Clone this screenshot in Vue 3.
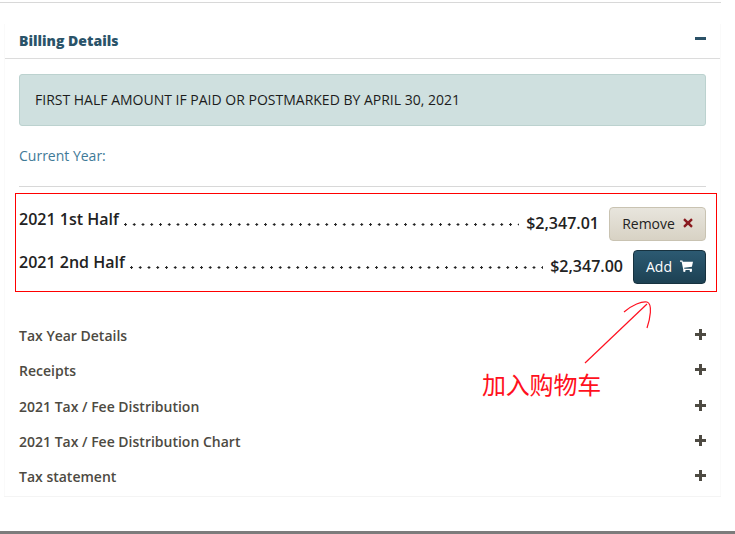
<template>
  <div class="page">
    <div class="panel">
      <div class="head">
        <h3>Billing Details</h3>
        <span class="minus"></span>
      </div>
      <div class="body">
        <div class="alert">FIRST HALF AMOUNT IF PAID OR POSTMARKED BY APRIL 30, 2021</div>
        <p class="year">Current Year:</p>
        <hr />
        <div class="rows">
          <div v-for="row in rows" :key="row.label" class="row">
            <span class="label">{{ row.label }}</span>
            <span class="dots"></span>
            <span class="amount">{{ row.amount }}</span>
            <button v-if="row.added" class="btn remove">
              Remove
              <svg width="10" height="10" viewBox="0 0 10 10"><path d="M1.8 0.3 5 3.2 8.2 0.3 9.8 2 6.9 5 9.8 8 8.2 9.7 5 6.8 1.8 9.7 0.2 8 3.1 5 0.2 2Z" fill="#8a1a1f" /></svg>
            </button>
            <button v-else class="btn add">
              Add
              <svg width="13" height="12" viewBox="0 0 12 11"><path d="M0 .4h2.2l.4 1.2H12l-1 4.7-7.2.8.2 1h7v1.1H3.1L1.5 1.5H0Z" fill="#fff" /><circle cx="4" cy="9.9" r="1.1" fill="#fff" /><circle cx="10" cy="9.9" r="1.1" fill="#fff" /></svg>
            </button>
          </div>
        </div>
        <ul class="sections">
          <li v-for="s in sections" :key="s">
            <span>{{ s }}</span>
            <span class="plus"></span>
          </li>
        </ul>
      </div>
    </div>

    <!-- 标注 -->
    <div class="mark-box"></div>
    <svg class="mark-arrow" width="80" height="70" viewBox="0 0 80 70" fill="none" stroke="#ff1020" stroke-width="1.2">
      <path d="M5 68 L67 9" />
      <path d="M44 17 C52 10 62 6 67 7 C73 9 70 24 67 33" />
    </svg>
    <div class="mark-text">加入购物车</div>
    <div class="bottom"></div>
  </div>
</template>

<script setup>
const rows = [
  { label: '2021 1st Half', amount: '$2,347.01', added: true },
  { label: '2021 2nd Half', amount: '$2,347.00', added: false }
]
const sections = [
  'Tax Year Details',
  'Receipts',
  '2021 Tax / Fee Distribution',
  '2021 Tax / Fee Distribution Chart',
  'Tax statement'
]
</script>

<style>
html, body {
  margin: 0;
  background: #fff;
}
</style>

<style scoped>
.page {
  position: relative;
  width: 735px;
  height: 534px;
  overflow: hidden;
  padding-top: 2px;
  box-sizing: border-box;
  font-family: "Open Sans", "Noto Sans CJK SC", sans-serif;
  color: #222;
}
.panel {
  width: 717px;
  margin-left: 4px;
  height: 495px;
  box-sizing: border-box;
  border-bottom: 1px solid #f4f4f4;
  position: relative;
}
.panel::before {
  content: "";
  position: absolute;
  top: 0;
  left: -4px;
  right: 0;
  border-top: 1px solid #d8d8d8;
}
.panel::after {
  content: "";
  position: absolute;
  top: 22px;
  bottom: 0;
  left: 0;
  right: 0;
  border: solid #fafafa;
  border-width: 0 1px;
  pointer-events: none;
}
.head {
  height: 57px;
  box-sizing: border-box;
  border-bottom: 1px solid #dcdcdc;
  display: flex;
  align-items: center;
  justify-content: space-between;
  padding: 21px 15px 0 15px;
}
h3 {
  margin: 0;
  font-size: 14px;
  font-weight: 800;
  color: #2a5369;
}
.minus {
  width: 11px;
  height: 3px;
  background: #2b5167;
  margin-top: -4px;
}
.body {
  padding: 15px 15px 0 15px;
}
.alert {
  height: 52px;
  box-sizing: border-box;
  background: #cfe0df;
  border: 1px solid #bcd2cf;
  border-radius: 3px;
  padding: 0 0 2px 15px;
  display: flex;
  align-items: center;
  font-size: 14px;
  color: #1c1c1c;
}
.year {
  margin: 21px 0 0;
  font-size: 14px;
  line-height: 18px;
  color: #3f7a97;
}
hr {
  margin: 21px 0 0;
  border: 0;
  border-top: 1px solid #d8d8d8;
}
.rows {
  padding-top: 20px;
  display: flex;
  flex-direction: column;
  gap: 9px;
}
.row {
  display: flex;
  align-items: center;
  height: 34px;
}
.label {
  font-size: 16px;
  font-weight: 600;
  margin-top: -10px;
}
.dots {
  flex: 1;
  height: 3px;
  margin: 0 7px 0 5px;
  background-image: radial-gradient(circle at 1.5px 1.5px, #222 1px, transparent 1.4px);
  background-size: 8.75px 3px;
  background-repeat: repeat-x;
}
.amount {
  font-size: 16px;
  font-weight: 600;
  margin: -2px 10px 0 0;
}
.btn {
  height: 34px;
  box-sizing: border-box;
  border-radius: 4px;
  font-family: inherit;
  font-size: 14px;
  display: flex;
  align-items: center;
  justify-content: center;
  gap: 8px;
  padding: 0 0 2px;
}
.remove {
  width: 97px;
  background: linear-gradient(#e8e5dd, #d8d2c4);
  border: 1px solid #c9c3b2;
  color: #222;
}
.add {
  width: 73px;
  background: linear-gradient(#2c5a72, #1d4153);
  border: 1px solid #17323f;
  color: #fff;
}
.sections {
  list-style: none;
  margin: 34px 0 0;
  padding: 0;
}
.sections li {
  height: 35.3px;
  display: flex;
  align-items: center;
  justify-content: space-between;
  font-size: 14px;
  font-weight: 600;
  color: #4d4a42;
}
.plus {
  width: 11px;
  height: 11px;
  margin-top: -2px;
  background:
    linear-gradient(#4d4a42, #4d4a42) center / 11px 3px no-repeat,
    linear-gradient(#4d4a42, #4d4a42) center / 3px 11px no-repeat;
}
.mark-box {
  position: absolute;
  left: 15px;
  top: 193px;
  width: 702px;
  height: 99px;
  box-sizing: border-box;
  border: 1px solid #ff0000;
}
.mark-arrow {
  position: absolute;
  left: 580px;
  top: 295px;
}
.mark-text {
  position: absolute;
  left: 482px;
  top: 371px;
  font-size: 24px;
  line-height: 28px;
  color: #ff1020;
  letter-spacing: -0.2px;
}
.bottom {
  position: absolute;
  left: 0;
  right: 0;
  bottom: 0;
  height: 3px;
  background: #7c7c7c;
}
</style>
